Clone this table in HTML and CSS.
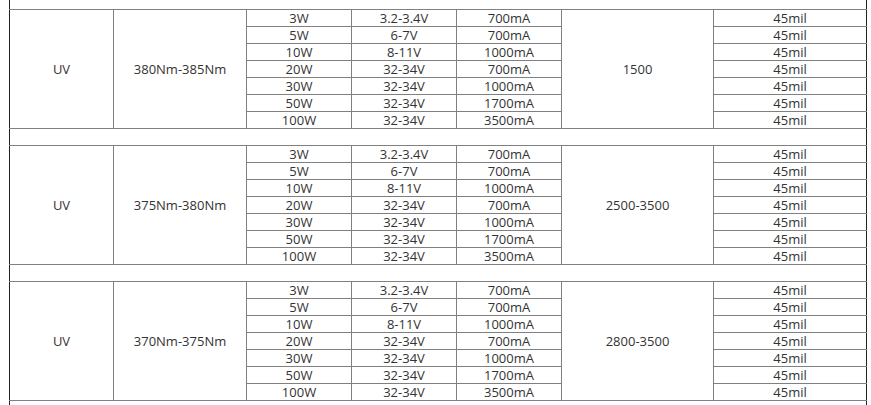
FILE: index.html
```html
<!DOCTYPE html>
<html lang="en">
<head>
<meta charset="utf-8">
<title>UV LED specs</title>
<link rel="stylesheet" href="styles.css">
</head>
<body>
<div class="wrap">
<table class="spec">
<colgroup>
<col class="c1"><col class="c2"><col class="c3"><col class="c4"><col class="c5"><col class="c6"><col class="c7">
</colgroup>
<tbody>
<tr class="gap"><td colspan="7" class="first last"></td></tr>

<tr><td rowspan="7" class="first">UV</td><td rowspan="7">380Nm-385Nm</td><td>3W</td><td>3.2-3.4V</td><td>700mA</td><td rowspan="7">1500</td><td class="last">45mil</td></tr>
<tr><td>5W</td><td>6-7V</td><td>700mA</td><td class="last">45mil</td></tr>
<tr><td>10W</td><td>8-11V</td><td>1000mA</td><td class="last">45mil</td></tr>
<tr><td>20W</td><td>32-34V</td><td>700mA</td><td class="last">45mil</td></tr>
<tr><td>30W</td><td>32-34V</td><td>1000mA</td><td class="last">45mil</td></tr>
<tr><td>50W</td><td>32-34V</td><td>1700mA</td><td class="last">45mil</td></tr>
<tr><td>100W</td><td>32-34V</td><td>3500mA</td><td class="last">45mil</td></tr>

<tr class="gap"><td colspan="7" class="first last"></td></tr>

<tr><td rowspan="7" class="first">UV</td><td rowspan="7">375Nm-380Nm</td><td>3W</td><td>3.2-3.4V</td><td>700mA</td><td rowspan="7">2500-3500</td><td class="last">45mil</td></tr>
<tr><td>5W</td><td>6-7V</td><td>700mA</td><td class="last">45mil</td></tr>
<tr><td>10W</td><td>8-11V</td><td>1000mA</td><td class="last">45mil</td></tr>
<tr><td>20W</td><td>32-34V</td><td>700mA</td><td class="last">45mil</td></tr>
<tr><td>30W</td><td>32-34V</td><td>1000mA</td><td class="last">45mil</td></tr>
<tr><td>50W</td><td>32-34V</td><td>1700mA</td><td class="last">45mil</td></tr>
<tr><td>100W</td><td>32-34V</td><td>3500mA</td><td class="last">45mil</td></tr>

<tr class="gap"><td colspan="7" class="first last"></td></tr>

<tr><td rowspan="7" class="first">UV</td><td rowspan="7">370Nm-375Nm</td><td>3W</td><td>3.2-3.4V</td><td>700mA</td><td rowspan="7">2800-3500</td><td class="last">45mil</td></tr>
<tr><td>5W</td><td>6-7V</td><td>700mA</td><td class="last">45mil</td></tr>
<tr><td>10W</td><td>8-11V</td><td>1000mA</td><td class="last">45mil</td></tr>
<tr><td>20W</td><td>32-34V</td><td>700mA</td><td class="last">45mil</td></tr>
<tr><td>30W</td><td>32-34V</td><td>1000mA</td><td class="last">45mil</td></tr>
<tr><td>50W</td><td>32-34V</td><td>1700mA</td><td class="last">45mil</td></tr>
<tr><td>100W</td><td>32-34V</td><td>3500mA</td><td class="last">45mil</td></tr>

<tr class="gap"><td colspan="7" class="first last"></td></tr>
</tbody>
</table>
</div>
</body>
</html>
```
FILE: styles.css
```css
html, body {
  margin: 0;
  padding: 0;
  background: #ffffff;
  overflow: hidden;
}
.wrap {
  padding: 0 0 0 9px;
}
.spec {
  margin-top: -8px;
  border-collapse: collapse;
  table-layout: fixed;
  width: 857px;
  font-family: "Open Sans", "Noto Sans", sans-serif;
  font-size: 13px;
  color: #333333;
}
.c1 { width: 104px; }
.c2 { width: 133px; }
.c3 { width: 105px; }
.c4 { width: 105px; }
.c5 { width: 105px; }
.c6 { width: 152px; }
.c7 { width: 153px; }
.spec td {
  border: 1px solid #808080;
  padding: 0;
  height: 16px;
  line-height: 16px;
  text-align: center;
  vertical-align: middle;
  white-space: nowrap;
}
.spec td.first { border-left-color: #222222; }
.spec td.last { border-right-color: #222222; }
```
